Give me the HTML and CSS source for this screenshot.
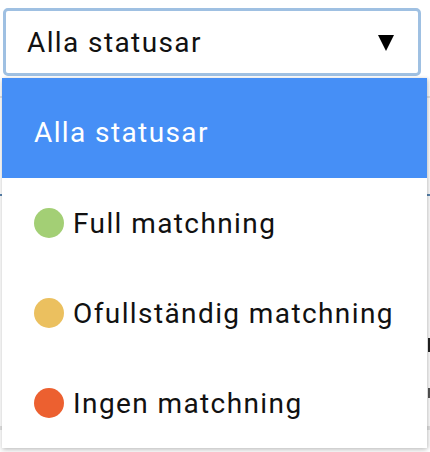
FILE: index.html
```html
<!DOCTYPE html>
<html lang="sv">
<head>
<meta charset="utf-8">
<link rel="stylesheet" href="styles.css">
</head>
<body>
<div class="page">
  <div class="select">
    <span class="select-label">Alla statusar</span>
    <svg class="caret" width="16" height="16" viewBox="0 0 16 16"><polygon points="0,0 16,0 8,16" fill="#000"/></svg>
  </div>
  <div class="backdrop">
    <div class="bg-row r1"></div>
    <div class="bg-row r2"></div>
    <div class="bg-row r3"><span class="bg-mark m1"></span><span class="bg-mark m2"></span></div>
    <div class="bg-row r4"></div>
  </div>
  <ul class="menu">
    <li class="option active">Alla statusar</li>
    <li class="option"><span class="dot green"></span>Full matchning</li>
    <li class="option"><span class="dot yellow"></span>Ofullständig matchning</li>
    <li class="option"><span class="dot red"></span>Ingen matchning</li>
  </ul>
</div>
</body>
</html>
```

FILE: styles.css
```css
* { box-sizing: border-box; }
html, body { margin: 0; padding: 0; background: #fff; }
body { font-family: Roboto, "Noto Sans", sans-serif; width: 430px; height: 452px; overflow: hidden; }
.page { position: relative; width: 430px; height: 452px; padding-top: 8px; }
.select {
  margin-left: 3px;
  width: 418px;
  height: 68px;
  border: 3px solid #9fc0e2;
  border-radius: 5px;
  display: flex;
  align-items: center;
  justify-content: space-between;
  padding: 0 24px 0 21px;
  background: #fff;
}
.select-label { font-size: 28px; letter-spacing: 1.4px; color: #111; }
.caret { display: block; margin-top: 1px; }
.backdrop { margin-top: 2px; }
.bg-row { border-bottom: 2px solid #e3e3e3; }
.r1 { height: 20px; }
.r2 { height: 98px; border-bottom-color: #5b86b0; }
.r3 { height: 232px; border-bottom-color: #e3e3e3; position: relative; }
.bg-mark { position: absolute; right: 0; width: 2px; background: #222; }
.m1 { top: 142px; height: 14px; }
.m2 { top: 192px; height: 10px; background: #555; }
.menu {
  position: absolute;
  left: 2px;
  top: 78px;
  width: 425px;
  margin: 0;
  padding: 0;
  list-style: none;
  background: #fff;
  box-shadow: 0 2px 5px rgba(0,0,0,0.22), 2px 0 3px rgba(0,0,0,0.08);
}
.option {
  height: 90px;
  display: flex;
  align-items: center;
  padding-left: 32px;
  font-size: 28px;
  letter-spacing: 1.4px;
  color: #111;
}
.option.active {
  height: 100px;
  background: #468ff6;
  color: #fff;
  padding-top: 8px;
}
.dot {
  width: 30px;
  height: 30px;
  border-radius: 50%;
  margin-right: 9px;
  flex: none;
}
.green { background: #a3cf75; }
.yellow { background: #ebc05f; }
.red { background: #ec6030; }
```
